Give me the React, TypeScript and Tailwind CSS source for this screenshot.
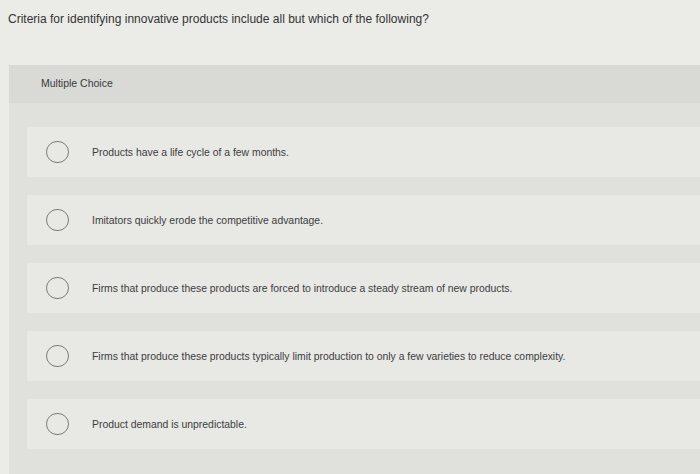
import React from "react";

const options = [
  "Products have a life cycle of a few months.",
  "Imitators quickly erode the competitive advantage.",
  "Firms that produce these products are forced to introduce a steady stream of new products.",
  "Firms that produce these products typically limit production to only a few varieties to reduce complexity.",
  "Product demand is unpredictable.",
];

export default function App() {
  return (
    <div
      className="w-[700px] h-[474px] overflow-hidden bg-[#ebebe8] flex flex-col"
      style={{ fontFamily: '"Liberation Sans", Arial, sans-serif' }}
    >
      <div className="pl-[8px] pt-[10px] h-[65px] text-[12px] text-[#333]">
        Criteria for identifying innovative products include all but which of the following?
      </div>
      <div className="ml-[9px] flex-1 bg-[#e0e0dd] flex flex-col">
        <div className="h-[38px] bg-[#d9d9d6] flex items-center pl-[32px] text-[10.5px] text-[#3a3a3a]">
          Multiple Choice
        </div>
        <div className="flex flex-col gap-[18px] pt-[24px] pl-[18px]">
          {options.map((o) => (
            <div key={o} className="h-[50px] bg-[#e8e8e5] flex items-center">
              <div className="ml-[19px] w-[23px] h-[22px] rounded-full border-[1.3px] border-[#7a7a7a] shrink-0" />
              <div className="ml-[23px] pt-[2px] text-[10.4px] text-[#3d3d3d]">{o}</div>
            </div>
          ))}
        </div>
      </div>
    </div>
  );
}
